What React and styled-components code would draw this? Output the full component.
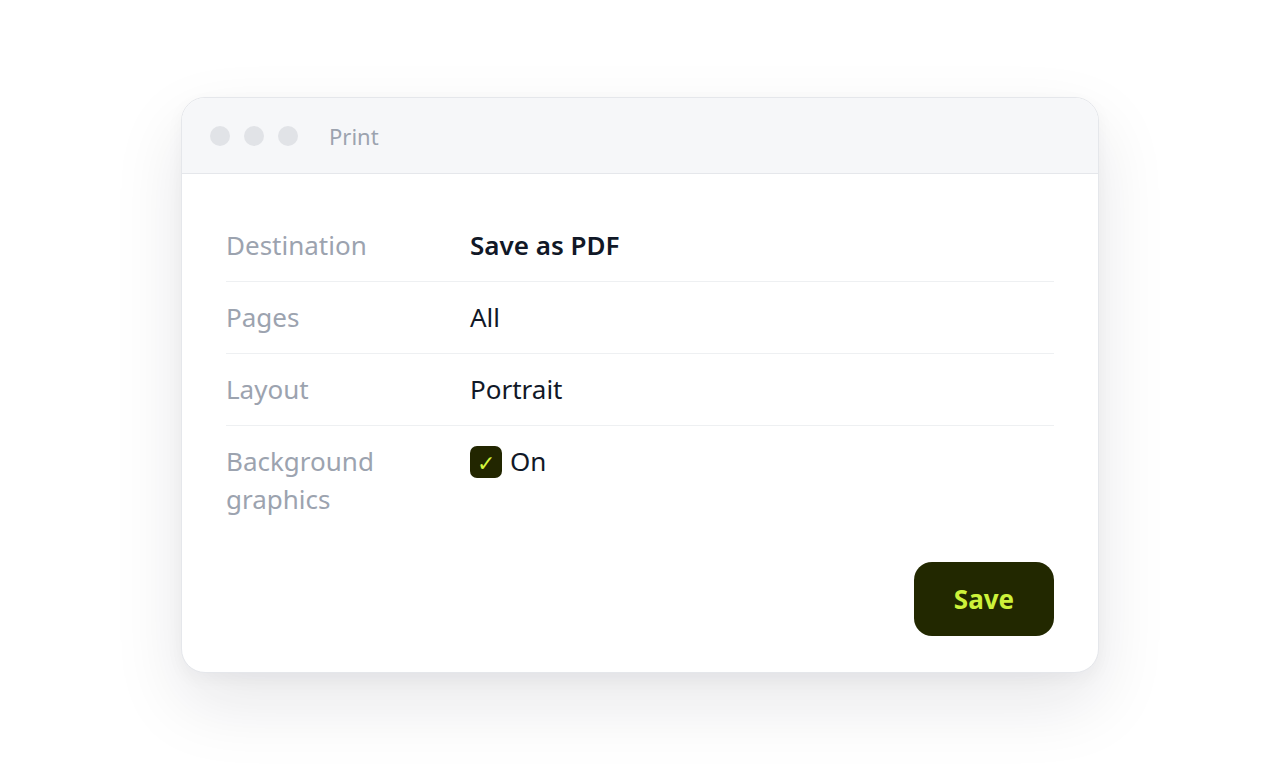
import React from "react";
import styled, { createGlobalStyle } from "styled-components";

const GlobalStyle = createGlobalStyle`
  html, body {
    margin: 0;
    padding: 0;
    background: #ffffff;
  }
  body {
    font-family: "Noto Sans", "Open Sans", sans-serif;
  }
`;

const Page = styled.div`
  display: flex;
  justify-content: center;
  align-items: center;
  width: 1280px;
  height: 770px;
`;

const Window = styled.div`
  width: 918px;
  box-sizing: border-box;
  background: #fff;
  border: 1px solid #e5e7eb;
  border-radius: 24px;
  box-shadow: 0 30px 70px rgba(17, 24, 39, 0.1), 0 6px 18px rgba(17, 24, 39, 0.04);
  overflow: hidden;
`;

const TitleBar = styled.div`
  display: flex;
  align-items: center;
  height: 75px;
  padding: 0 28px;
  background: #f6f7f9;
  border-bottom: 1px solid #e5e7eb;
`;

const Dots = styled.div`
  display: flex;
  gap: 14px;
  margin-right: 31px;
`;

const Dot = styled.span`
  width: 20px;
  height: 20px;
  border-radius: 50%;
  background: #e1e3e7;
`;

const Title = styled.span`
  font-size: 22px;
  color: #9ca3af;
`;

const Body = styled.div`
  padding: 36px 44px;
`;

const Row = styled.div`
  display: grid;
  grid-template-columns: 244px 1fr;
  padding: 16px 0;
  line-height: 39px;
  font-size: 26px;
  border-bottom: ${(p) => (p.$last ? "none" : "1px solid #eef0f2")};
`;

const Label = styled.div`
  color: #9ca3af;
  line-height: ${(p) => (p.$multi ? "38px" : "39px")};
`;

const Value = styled.div`
  display: flex;
  align-items: flex-start;
  gap: 8px;
  color: #111827;
  font-weight: ${(p) => (p.$strong ? 600 : 400)};
`;

const Check = styled.span`
  display: inline-flex;
  justify-content: center;
  align-items: center;
  width: 32px;
  height: 32px;
  margin-top: 4px;
  border-radius: 7px;
  background: #222600;
  color: #d4f53c;
  font-size: 22px;
  line-height: 1;
`;

const Footer = styled.div`
  display: flex;
  justify-content: flex-end;
  margin-top: 28px;
`;

const SaveButton = styled.button`
  width: 140px;
  height: 74px;
  border: none;
  border-radius: 18px;
  background: #222800;
  color: #cdf23a;
  font-family: "Noto Sans", "Open Sans", sans-serif;
  font-size: 26px;
  font-weight: 700;
  cursor: pointer;
`;

const rows = [
  { label: "Destination", value: "Save as PDF", strong: true },
  { label: "Pages", value: "All" },
  { label: "Layout", value: "Portrait" },
];

export default function App() {
  return (
    <>
      <GlobalStyle />
      <Page>
        <Window>
          <TitleBar>
            <Dots>
              <Dot />
              <Dot />
              <Dot />
            </Dots>
            <Title>Print</Title>
          </TitleBar>
          <Body>
            {rows.map((r) => (
              <Row key={r.label}>
                <Label>{r.label}</Label>
                <Value $strong={r.strong}>{r.value}</Value>
              </Row>
            ))}
            <Row $last>
              <Label $multi>
                Background
                <br />
                graphics
              </Label>
              <Value>
                <Check>✓</Check>
                On
              </Value>
            </Row>
            <Footer>
              <SaveButton>Save</SaveButton>
            </Footer>
          </Body>
        </Window>
      </Page>
    </>
  );
}
